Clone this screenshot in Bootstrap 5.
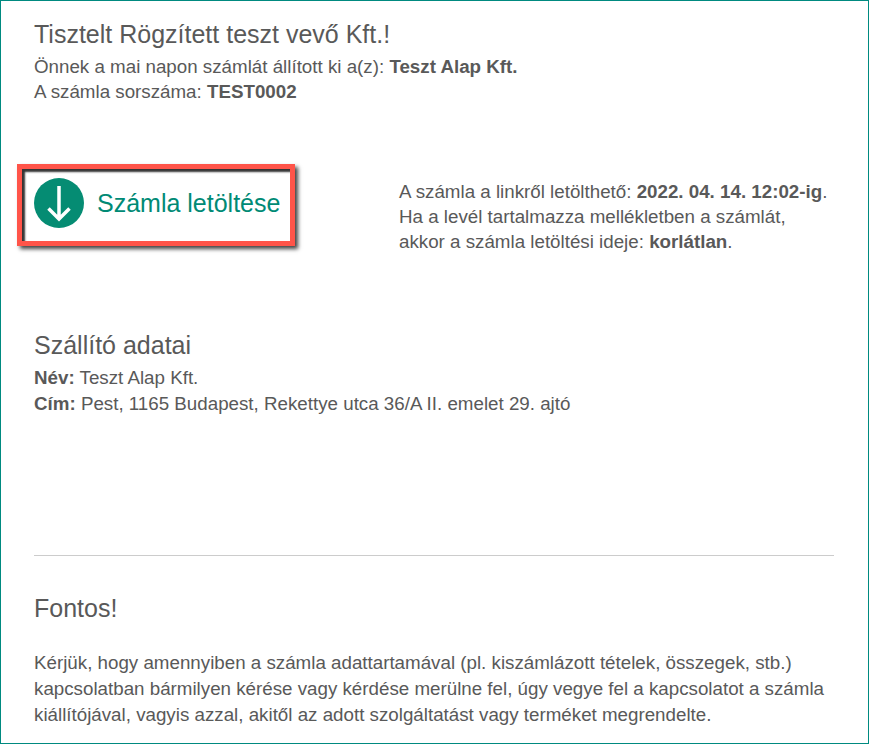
<!DOCTYPE html>
<html lang="hu"><head><meta charset="utf-8"><title>Számla</title>
<link href="https://cdn.jsdelivr.net/npm/bootstrap@5.3.0/dist/css/bootstrap.min.css" rel="stylesheet">
<style>
html,body{height:100%;}
body{font-family:"Liberation Sans",Arial,sans-serif;color:#595959;background:#fff;font-size:18.75px;line-height:25px;overflow:hidden;}
.mail-frame{height:744px;border:1px solid #008a80;padding:18px 34px 0 33px;overflow:hidden;}
.mail-title{font-size:25px;line-height:30px;font-weight:400;margin:0 0 5px;color:#595959;}
.mail-text{margin:0;}
.mail-text b{font-weight:700;}
.dl-row{margin-top:60px;}
.dl-box{position:relative;left:-17px;width:278px;height:82px;flex:none;border:5px solid #ff5449;box-shadow:inset 3px 3px 2px #333,3px 3px 4px #444;padding:0 0 4px 12px;}
.dl-label{font-size:25px;line-height:30px;color:#008a75;margin-left:13px;white-space:nowrap;}
.dl-note{margin-left:87px;margin-top:15px;white-space:nowrap;}
.sec-supplier{margin-top:76px;}
.sec-supplier .mail-text{line-height:26px;}
.mail-rule{margin:138px 0 0;border:0;border-top:1px solid #ccc;opacity:1;}
.sec-note{margin-top:37px;}
.sec-note .mail-text{margin-top:27px;line-height:26px;white-space:nowrap;}
</style></head><body>
<div class="mail-frame">
 <h1 class="mail-title">Tisztelt Rögzített teszt vevő Kft.!</h1>
 <p class="mail-text">Önnek a mai napon számlát állított ki a(z): <b>Teszt Alap Kft.</b><br>A számla sorszáma: <b>TEST0002</b></p>
 <div class="dl-row d-flex align-items-start">
  <a class="dl-box d-flex align-items-center text-decoration-none" href="#">
   <svg width="50" height="50" viewBox="0 0 50 50" aria-hidden="true"><circle cx="25" cy="25" r="25" fill="#058c73"/><path d="M25 8V41M14.500 30.500 25 41 35.500 30.500" fill="none" stroke="#fff" stroke-width="3.500"/></svg>
   <span class="dl-label">Számla letöltése</span>
  </a>
  <p class="mail-text dl-note">A számla a linkről letölthető: <b>2022. 04. 14. 12:02-ig</b>.<br>Ha a levél tartalmazza mellékletben a számlát,<br>akkor a számla letöltési ideje: <b>korlátlan</b>.</p>
 </div>
 <div class="sec-supplier">
  <h2 class="mail-title">Szállító adatai</h2>
  <p class="mail-text"><b>Név:</b> Teszt Alap Kft.<br><b>Cím:</b> Pest, 1165 Budapest, Rekettye utca 36/A II. emelet 29. ajtó</p>
 </div>
 <hr class="mail-rule">
 <div class="sec-note">
  <h2 class="mail-title">Fontos!</h2>
  <p class="mail-text">Kérjük, hogy amennyiben a számla adattartamával (pl. kiszámlázott tételek, összegek, stb.)<br>kapcsolatban bármilyen kérése vagy kérdése merülne fel, úgy vegye fel a kapcsolatot a számla<br>kiállítójával, vagyis azzal, akitől az adott szolgáltatást vagy terméket megrendelte.</p>
 </div>
</div>
</body></html>
